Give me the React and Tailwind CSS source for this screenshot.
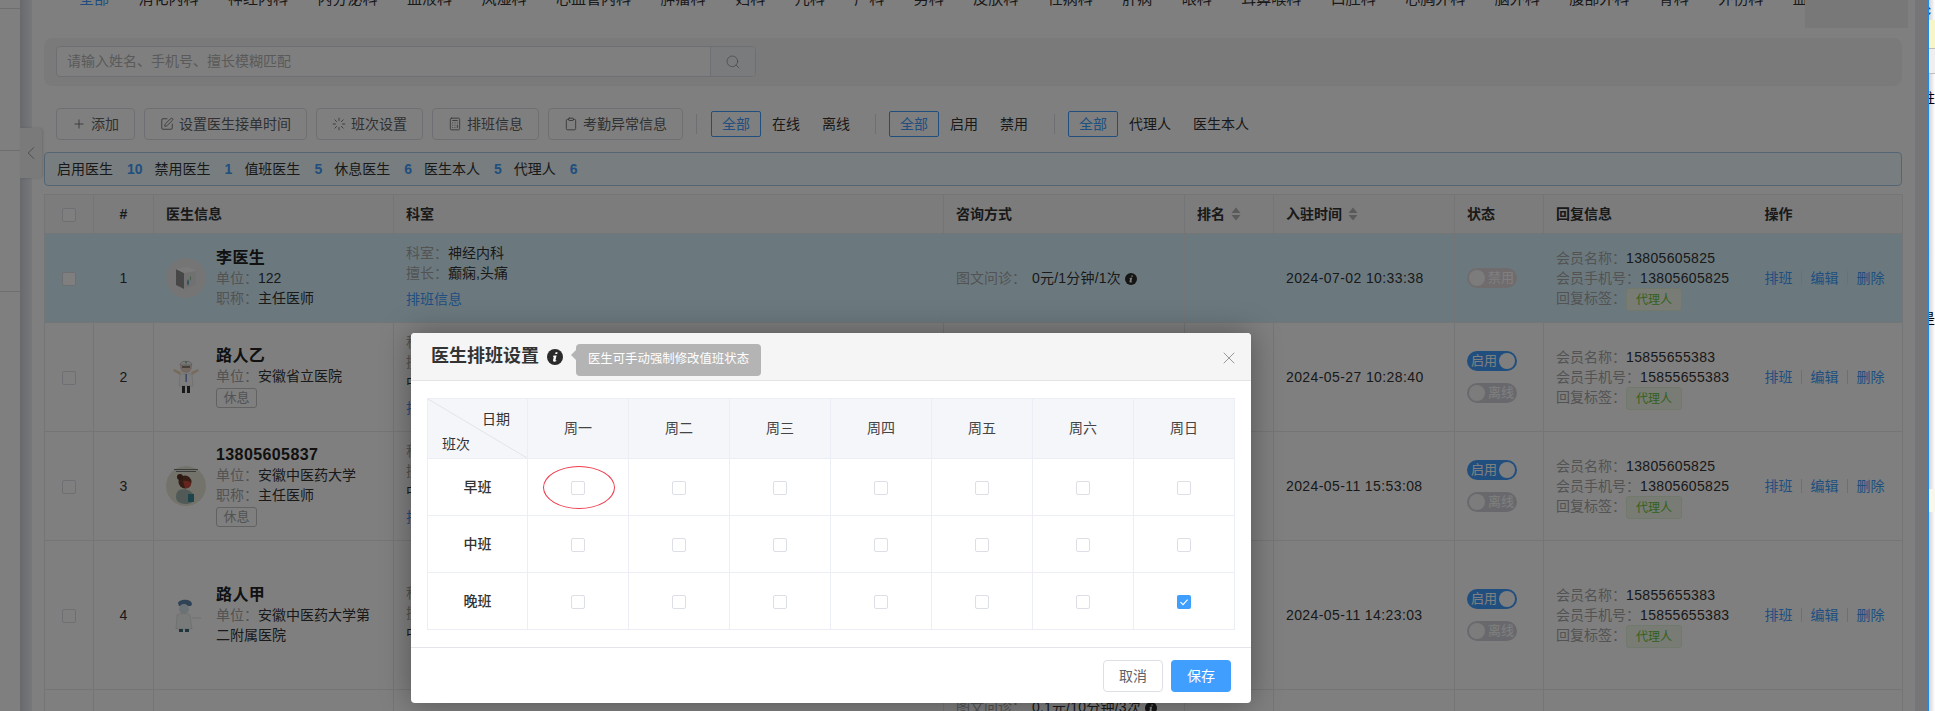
import { Plus, SquarePen, Loader, Calculator, Clipboard, Search, X, ChevronLeft } from 'lucide-react';

const tabs = ['全部', '消化内科', '神经内科', '内分泌科', '血液科', '风湿科', '心血管内科', '肿瘤科', '妇科', '儿科', '产科', '男科', '皮肤科', '性病科', '肝病', '眼科', '耳鼻喉科', '口腔科', '心胸外科', '脑外科', '腹部外科', '骨科', '外伤科', '血管外科'];
const days = ['周一', '周二', '周三', '周四', '周五', '周六', '周日'];
const shifts = ['早班', '中班', '晚班'];

const doctors = [
  { id: 1, name: '李医生', unit: '122', title: '主任医师', dept: '神经内科', skill: '癫痫,头痛', fee: '0元/1分钟/1次', date: '2024-07-02 10:33:38', member: '13805605825', avatar: 'box', height: 'h-[89px]', disabled: true },
  { id: 2, name: '路人乙', unit: '安徽省立医院', rest: true, dept: '内科', skill: '内科常见病多发病中医内科调理', fee: '0元/1分钟/1次', date: '2024-05-27 10:28:40', member: '15855655383', avatar: 'doc', height: 'h-[109px]', schedule: true },
  { id: 3, name: '13805605837', unit: '安徽中医药大学', title: '主任医师', rest: true, dept: '内科', skill: '内科常见病多发病中医内科调理', fee: '0元/1分钟/1次', date: '2024-05-11 15:53:08', member: '13805605825', avatar: 'girl', height: 'h-[109px]', schedule: true },
  { id: 4, name: '路人甲', unit: '安徽中医药大学第二附属医院', dept: '内科', skill: '内科常见病多发病中医内科调理', fee: '0元/1分钟/1次', date: '2024-05-11 14:23:03', member: '15855655383', avatar: 'nurse', height: 'h-[149px]' },
];

function InfoIcon({ size = 12 }) {
  return (
    <svg width={size} height={size} viewBox="0 0 16 16" className="inline-block shrink-0">
      <circle cx="8" cy="8" r="8" fill="#2b2b2b" />
      <path d="M8.6 3.2h2l-.4 1.9h-2zM7.6 6.4h2l-1.1 4.6c-.1.4.2.5.9.3l-.2.9c-.6.3-1.3.5-1.9.5-1 0-1.5-.6-1.2-1.6l.7-3.3-.8-.1.1-1z" fill="#fff" />
    </svg>
  );
}

function SortIcon() {
  return (
    <svg width="10" height="14" viewBox="0 0 10 14" className="ml-[6px] inline-block align-[-2px]">
      <path d="M5 0.5 9.5 6h-9z" fill="#b5b5b5" />
      <path d="M5 13.5.5 8h9z" fill="#b5b5b5" />
    </svg>
  );
}

function Avatar({ kind }) {
  if (kind === 'box') {
    return (
      <svg width="40" height="40" viewBox="0 0 40 40" className="shrink-0">
        <circle cx="20" cy="20" r="20" fill="#ebebeb" />
        <path d="M10 11l8 4v16l-8-4z" fill="#8f8f8f" />
        <path d="M18 15l12-2v14l-12 4z" fill="#e2e2e2" />
        <path d="M10 11l12-2 8 4-12 2z" fill="#f4f4f4" />
        <path d="M22 21c1 2 1 5 0 7-1-2-1-5 0-7z" fill="#2f8fb0" />
        <path d="M24 18c1 1 1 3 0 5z" fill="#55a868" />
      </svg>
    );
  }
  if (kind === 'doc') {
    return (
      <svg width="40" height="40" viewBox="0 0 40 40" className="shrink-0">
        <circle cx="20" cy="10" r="6" fill="#e9d2c4" />
        <path d="M14 8c0-5 12-5 12 0z" fill="#f2f2f2" stroke="#999" strokeWidth=".5" />
        <path d="M19.5 4.5h1v2h-1z" fill="#3a9a5a" />
        <path d="M16 10h8" stroke="#333" strokeWidth="1" />
        <path d="M14 17h12l1 12H13z" fill="#fafafa" stroke="#ccc" strokeWidth=".5" />
        <path d="M19.6 17h1v8h-1z" fill="#2c5fa8" />
        <path d="M14 18 7 14l1-2 7 3zM26 18l7-4-1-2-7 3z" fill="#efd6b8" />
        <path d="M16 29h3v7h-3zM21 29h3v7h-3z" fill="#333" />
      </svg>
    );
  }
  if (kind === 'girl') {
    return (
      <svg width="40" height="40" viewBox="0 0 40 40" className="shrink-0">
        <circle cx="20" cy="20" r="20" fill="#e9e6d6" />
        <path d="M8 3h24v1H8zM10 5h20v1H10z" fill="#777" />
        <circle cx="19" cy="16" r="6.5" fill="#6a3b2c" />
        <circle cx="14" cy="11" r="3" fill="#5a3024" />
        <path d="M17 15c4-1 8 0 8 3s-3 5-6 4z" fill="#c94a3d" />
        <path d="M13 24c6-2 13 0 15 6 1 4-1 8-8 8s-10-3-10-7 1-5 3-7z" fill="#a4b4b0" />
        <path d="M22 28h6v8h-6z" fill="#3a8a96" />
      </svg>
    );
  }
  return (
    <svg width="40" height="40" viewBox="0 0 40 40" className="shrink-0">
      <path d="M12 8c1-4 13-5 14 1l-1 2H13z" fill="#5f86ad" />
      <circle cx="18" cy="14" r="5" fill="#d8e6ee" />
      <path d="M11 20c3-2 11-2 13 0l2 14H10z" fill="#f2f4f4" stroke="#ccc" strokeWidth=".5" />
      <path d="M13 34h4v3h-4zM19 34h4v3h-4z" fill="#3d6a78" />
      <path d="M26 23h9" stroke="#ddd" strokeWidth="1" />
    </svg>
  );
}

function Checkbox({ checked }) {
  if (checked) {
    return (
      <span className="inline-flex h-[14px] w-[14px] items-center justify-center rounded-[2px] bg-[#409eff] align-middle">
        <svg width="10" height="10" viewBox="0 0 10 10">
          <path d="M1.5 5.2 4 7.6l4.6-5" fill="none" stroke="#fff" strokeWidth="1.1" />
        </svg>
      </span>
    );
  }
  return <span className="inline-block h-[14px] w-[14px] rounded-[2px] border border-[#dcdfe6] bg-white align-middle"></span>;
}

function Switch({ on, label, faded }) {
  if (on) {
    return (
      <div className="flex h-[20px] w-[50px] items-center justify-between rounded-full bg-[#409eff] pl-[4px] pr-[2px] text-[13px] text-white">
        {label}
        <span className="h-[16px] w-[16px] rounded-full bg-white"></span>
      </div>
    );
  }
  return (
    <div className={`flex h-[20px] w-[50px] items-center gap-[3px] rounded-full pl-[2px] text-[13px] text-white ${faded ? 'bg-[#e0d8dc]' : 'bg-[#d2d3da]'}`}>
      <span className="h-[16px] w-[16px] rounded-full bg-[#f8f8f8]"></span>
      {label}
    </div>
  );
}

function ToolButton({ icon: Icon, children }) {
  return (
    <button className="flex h-[32px] items-center gap-[5px] rounded-[4px] border border-[#dcdfe6] bg-white px-[15px] text-[14px] text-[#606266]">
      <Icon size={14} strokeWidth={1.4} />
      {children}
    </button>
  );
}

function RadioGroup({ items }) {
  return (
    <div className="flex items-center">
      {items.map((item, i) => (
        <span
          key={item}
          className={`flex h-[26px] items-center border px-[10px] text-[14px] ${i === 0 ? 'rounded-[2px] border-[#409eff] text-[#409eff]' : 'border-transparent text-[#333]'}`}
        >
          {item}
        </span>
      ))}
    </div>
  );
}

function Stat({ label, value }) {
  return (
    <>
      <span>{label}</span>
      <b className="ml-[14px] mr-[12px] font-bold text-[#409eff]">{value}</b>
    </>
  );
}

function Field({ label, children }) {
  return (
    <div className="h-[20px] leading-[20px]">
      <span className="text-[#a6a6a6]">{label}：</span>
      {children}
    </div>
  );
}

function DoctorRow({ d }) {
  const cell = 'border border-[#e8eaec] px-[12px] align-middle';
  return (
    <tr className={`${d.height} ${d.disabled ? 'bg-[#d7f3ff]' : 'bg-white'}`}>
      <td className="border border-[#e8eaec] text-center align-middle"><Checkbox /></td>
      <td className="border border-[#e8eaec] text-center align-middle text-[14px] text-[#333]">{d.id}</td>
      <td className="border border-[#e8eaec] pl-[12px] align-middle">
        <div className="flex items-center gap-[10px]">
          <Avatar kind={d.avatar} />
          <div className="w-[165px] text-[14px] text-[#333]">
            <div className="h-[20px] text-[16px] font-bold leading-[20px] tracking-[0.4px] text-[#222]">{d.name}</div>
            <div className="leading-[20px]"><span className="text-[#a6a6a6]">单位：</span>{d.unit}</div>
            {d.title && <Field label="职称">{d.title}</Field>}
            {d.rest && <span className="mt-[2px] block h-[20px] w-[41px] rounded-[3px] border border-[#c4c4c4] text-center text-[13px] leading-[18px] text-[#a6a6a6]">休息</span>}
          </div>
        </div>
      </td>
      <td className={`${cell} pb-[4px] text-[14px] text-[#333]`}>
        <Field label="科室">{d.dept}</Field>
        <div className="w-[156px] leading-[20px]"><span className="text-[#a6a6a6]">擅长：</span>{d.skill}</div>
        {(d.disabled || d.schedule) && <div className="mt-[6px] leading-[20px] text-[#409eff]">排班信息</div>}
      </td>
      <td className={`${cell} whitespace-nowrap text-[14px] text-[#333]`}>
        <span className="text-[#a6a6a6]">图文问诊：</span>
        <span className="ml-[6px] mr-[4px] tracking-[0.2px]">{d.fee}</span>
        <InfoIcon />
      </td>
      <td className={cell}></td>
      <td className={`${cell} text-[14px] tracking-[0.4px] text-[#333]`}>{d.date}</td>
      <td className={cell}>
        <div className="flex flex-col gap-[12px]">
          {d.disabled ? <Switch label="禁用" faded /> : <Switch on label="启用" />}
          {!d.disabled && <Switch label="离线" />}
        </div>
      </td>
      <td className="border-y border-l border-[#e8eaec] pl-[12px] align-middle text-[14px] text-[#333]">
        <div className="h-[20px] leading-[20px]"><span className="text-[#a6a6a6]">会员名称：</span><span className="tracking-[0.35px]">{d.member}</span></div>
        <div className="h-[20px] leading-[20px]"><span className="text-[#a6a6a6]">会员手机号：</span><span className="tracking-[0.35px]">{d.member}</span></div>
        <div className="flex h-[20px] items-center">
          <span className="text-[#a6a6a6]">回复标签：</span>
          <span className="mt-[3px] flex h-[23px] w-[56px] items-center justify-center rounded-[3px] border border-[#e1f3d8] bg-[#f0f9eb] text-[12px] text-[#67c23a]">代理人</span>
        </div>
      </td>
      <td className="border-y border-r border-[#e8eaec] pl-[13px] align-middle text-[14px] text-[#409eff]">
        <div className="flex items-center">
          排班
          <span className="mx-[8.5px] h-[14px] w-px bg-[#dcdfe6]"></span>
          编辑
          <span className="mx-[8.5px] h-[14px] w-px bg-[#dcdfe6]"></span>
          删除
        </div>
      </td>
    </tr>
  );
}

function DoctorTable() {
  const th = 'border border-[#e8eaec] px-[12px] text-left text-[14px] font-bold text-[#333]';
  return (
    <table className="w-[1858px] table-fixed border-collapse">
      <colgroup>
        <col className="w-[49px]" />
        <col className="w-[60px]" />
        <col className="w-[240px]" />
        <col className="w-[550px]" />
        <col className="w-[241px]" />
        <col className="w-[89px]" />
        <col className="w-[181px]" />
        <col className="w-[89px]" />
        <col className="w-[208px]" />
        <col className="w-[151px]" />
      </colgroup>
      <thead>
        <tr className="h-[39px] bg-[#f8f8f9]">
          <th className="border border-[#e8eaec] text-center"><Checkbox /></th>
          <th className="border border-[#e8eaec] text-center text-[14px] font-bold text-[#333]">#</th>
          <th className={th}>医生信息</th>
          <th className={th}>科室</th>
          <th className={th}>咨询方式</th>
          <th className={th}>排名<SortIcon /></th>
          <th className={th}>入驻时间<SortIcon /></th>
          <th className={th}>状态</th>
          <th className="border-y border-l border-[#e8eaec] pl-[12px] text-left text-[14px] font-bold text-[#333]">回复信息</th>
          <th className="border-y border-r border-[#e8eaec] pl-[13px] text-left text-[14px] font-bold text-[#333]">操作</th>
        </tr>
      </thead>
      <tbody>
        {doctors.map((d) => <DoctorRow key={d.id} d={d} />)}
        <tr className="h-[90px] bg-white">
          <td className="border border-[#e8eaec]"></td>
          <td className="border border-[#e8eaec]"></td>
          <td className="border border-[#e8eaec]"></td>
          <td className="border border-[#e8eaec]"></td>
          <td className="whitespace-nowrap border border-[#e8eaec] px-[12px] pt-[7px] align-top text-[14px] text-[#333]">
            <span className="text-[#a6a6a6]">图文问诊：</span>
            <span className="ml-[6px] mr-[4px] tracking-[0.2px]">0.1元/10分钟/3次</span>
            <InfoIcon />
          </td>
          <td className="border border-[#e8eaec]"></td>
          <td className="border border-[#e8eaec]"></td>
          <td className="border border-[#e8eaec]"></td>
          <td className="border-y border-l border-[#e8eaec]"></td>
          <td className="border-y border-r border-[#e8eaec]"></td>
        </tr>
      </tbody>
    </table>
  );
}

function ScheduleModal() {
  const cell = 'border border-[#ebeef5] text-center';
  return (
    <div className="absolute left-[411px] top-[333px] z-20 h-[370px] w-[840px] rounded-[4px] bg-white shadow-[0_0_30px_rgba(0,0,0,0.35)]">
      <div className="relative flex h-[48px] items-center rounded-t-[4px] border-b border-[#e4e4e6] bg-[#f5f5f5] pl-[20px]">
        <span className="text-[18px] font-bold text-[#333]">医生排班设置</span>
        <span className="ml-[8px]"><InfoIcon size={16} /></span>
        <div className="relative ml-[13px] mt-[6px] flex h-[32px] w-[185px] items-center justify-center rounded-[4px] bg-[#b4b4b4] text-[12.4px] text-white">
          <span className="absolute left-[-5px] top-[6px] h-0 w-0 border-y-[5px] border-r-[5px] border-y-transparent border-r-[#b4b4b4]"></span>
          医生可手动强制修改值班状态
        </div>
        <X size={20} strokeWidth={0.9} className="absolute right-[12px] top-[15px] text-[#777]" />
      </div>
      <div className="px-[16px] py-[17px]">
        <table className="w-[807px] table-fixed border-collapse text-[14px]">
          <colgroup>
            <col className="w-[100px]" />
            {days.map((day) => <col key={day} className="w-[101px]" />)}
          </colgroup>
          <thead>
            <tr className="h-[60px] bg-[#f4f6fa]">
              <th className="relative border border-[#ebeef5] font-normal text-[#333]">
                <svg className="absolute inset-0 h-full w-full" viewBox="0 0 100 60" preserveAspectRatio="none">
                  <line x1="0" y1="0" x2="100" y2="60" stroke="#e2e4ea" strokeWidth="1" />
                </svg>
                <span className="absolute right-[17px] top-[10px]">日期</span>
                <span className="absolute left-[14px] top-[35px]">班次</span>
              </th>
              {days.map((day) => <th key={day} className={`${cell} font-normal text-[#444]`}>{day}</th>)}
            </tr>
          </thead>
          <tbody>
            {shifts.map((shift, r) => (
              <tr key={shift} className="h-[57px]">
                <td className={`${cell} font-medium text-[#333]`}>{shift}</td>
                {days.map((day, c) => (
                  <td key={day} className={`${cell} relative`}>
                    <Checkbox checked={r === 2 && c === 6} />
                    {r === 0 && c === 0 && (
                      <span className="absolute left-[15px] top-[7px] h-[43px] w-[72px] rounded-[50%] border border-[#ee3b4c]"></span>
                    )}
                  </td>
                ))}
              </tr>
            ))}
          </tbody>
        </table>
      </div>
      <div className="flex justify-end gap-[8px] border-t border-[#e4e4ea] pr-[20px] pt-[12px]">
        <button className="h-[32px] w-[60px] rounded-[4px] border border-[#dcdfe6] bg-white text-[14px] text-[#606266]">取消</button>
        <button className="h-[32px] w-[60px] rounded-[4px] bg-[#409eff] text-[14px] text-white">保存</button>
      </div>
    </div>
  );
}

function SideStrip() {
  return (
    <div className="w-[7px] shrink-0 overflow-hidden border-l border-[#1e88e5] bg-gradient-to-r from-[#d4d4d4] to-white text-[14px] leading-[20px] text-black">
      <div className="h-[20px] -ml-[8px] whitespace-nowrap text-[#223]">ic</div>
      <div className="h-[28px] bg-[#f6f6c8]"></div>
      <div className="h-[26px] border-y border-[#bdbdbd] bg-[#efefef]"></div>
      <div className="mt-[14px] h-[20px] -ml-[8px] whitespace-nowrap">柱</div>
      <div className="mt-[200px] h-[20px] -ml-[8px] whitespace-nowrap">是</div>
      <div className="mt-[161px] h-[23px] bg-[#f7f7ec]"></div>
    </div>
  );
}

export default function App() {
  return (
    <div className="flex h-[711px] w-[1935px] overflow-hidden bg-white font-[family-name:'Liberation_Sans','Noto_Sans_CJK_SC',sans-serif]">
      <div className="relative flex h-full w-[1928px] shrink-0 overflow-hidden">
        {/* sidebar edge */}
        <div className="w-[20px] shrink-0 bg-white">
          <div className="mt-[8px] border-t border-[#dddddd]"></div>
          <div className="mt-[141px] border-t border-[#dddddd]"></div>
          <div className="mt-[140px] border-t border-[#dddddd]"></div>
        </div>
        <div className="w-[12px] shrink-0 bg-gradient-to-r from-[#d0d3da] to-[#eef0f5]"></div>

        <main className="w-[1883px] shrink-0 bg-white pl-[12px] pr-[13px]">
          <div className="-mt-[11px] flex h-[20px] gap-[29.5px] whitespace-nowrap pl-[35px] text-[15px] leading-[20px] text-[#333]">
            {tabs.map((tab, i) => (
              <span key={tab} className={i === 0 ? 'text-[#409eff]' : ''}>{tab}</span>
            ))}
          </div>

          <div className="mt-[29px] h-[48px] rounded-[8px] bg-[#f5f5f5] px-[12px] py-[8px]">
            <div className="flex h-[31px] w-[700px] rounded-[4px] border border-[#dcdfe6] bg-white">
              <div className="flex flex-1 items-center pl-[10px] text-[14px] text-[#b4b4b4]">请输入姓名、手机号、擅长模糊匹配</div>
              <div className="flex w-[45px] items-center justify-center rounded-r-[4px] border-l border-[#dcdfe6] bg-[#f5f7fa] text-[#909399]">
                <Search size={16} strokeWidth={1.2} />
              </div>
            </div>
          </div>

          <div className="ml-[12px] mt-[22px] flex h-[32px] items-center">
            <div className="flex gap-[9px]">
              <ToolButton icon={Plus}>添加</ToolButton>
              <ToolButton icon={SquarePen}>设置医生接单时间</ToolButton>
              <ToolButton icon={Loader}>班次设置</ToolButton>
              <ToolButton icon={Calculator}>排班信息</ToolButton>
              <ToolButton icon={Clipboard}>考勤异常信息</ToolButton>
            </div>
            <span className="ml-[13px] mr-[14px] h-[20px] w-px bg-[#dcdfe6]"></span>
            <RadioGroup items={['全部', '在线', '离线']} />
            <span className="ml-[14px] mr-[13px] h-[20px] w-px bg-[#dcdfe6]"></span>
            <RadioGroup items={['全部', '启用', '禁用']} />
            <span className="ml-[15px] mr-[13px] h-[20px] w-px bg-[#dcdfe6]"></span>
            <RadioGroup items={['全部', '代理人', '医生本人']} />
          </div>

          <div className="mt-[12px] flex h-[34px] items-center rounded-[4px] border border-[#a9cdea] bg-[#f1fbff] pl-[12px] text-[14px] text-[#333]">
            <Stat label="启用医生" value="10" />
            <Stat label="禁用医生" value="1" />
            <Stat label="值班医生" value="5" />
            <Stat label="休息医生" value="6" />
            <Stat label="医生本人" value="5" />
            <Stat label="代理人" value="6" />
          </div>

          <div className="mt-[8px]">
            <DoctorTable />
          </div>
        </main>

        <div className="w-[13px] shrink-0 bg-[#ecedf2]"></div>

        <div className="absolute right-[20px] top-0 h-[28px] w-[103px] bg-[#f1f1f1]"></div>
        <div className="absolute left-[20px] top-[128px] flex h-[50px] w-[22px] items-center justify-center rounded-r-[4px] bg-[#f5f5f5] shadow-[1px_0_3px_rgba(0,0,0,0.15)]">
          <ChevronLeft size={24} strokeWidth={0.9} className="text-[#8a8a8a]" />
        </div>

        {/* overlay */}
        <div className="absolute inset-0 z-10 bg-black/50"></div>
        <ScheduleModal />
      </div>
      <SideStrip />
    </div>
  );
}
